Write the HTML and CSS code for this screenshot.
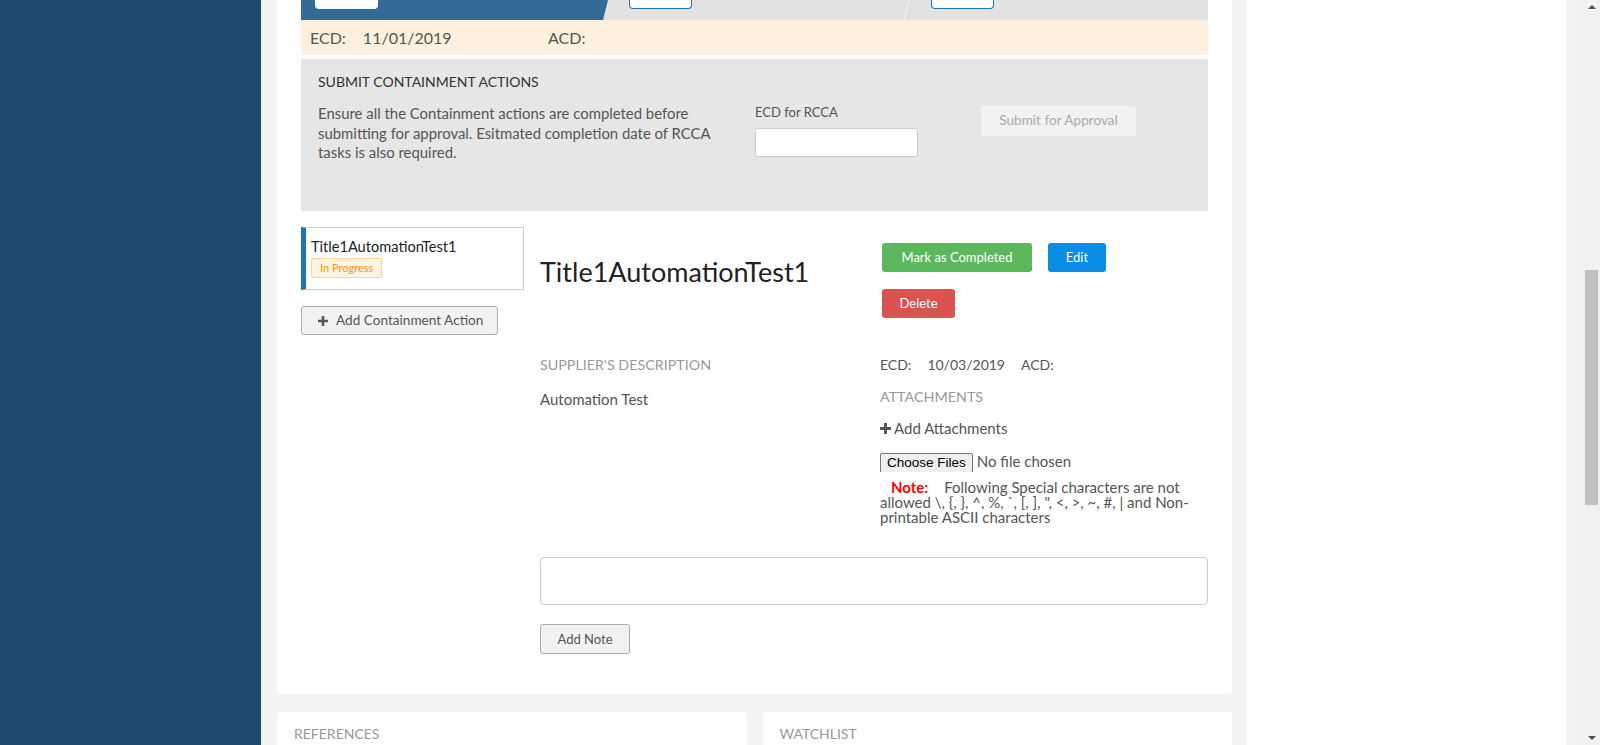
FILE: index.html
```html
<!DOCTYPE html>
<html lang="en">
<head>
<meta charset="utf-8">
<title>Containment Actions</title>
<link rel="stylesheet" href="styles.css">
</head>
<body>
<div class="layout">
  <aside class="sidebar"></aside>

  <main class="main">
    <section class="card main-card">
      <div class="steps">
        <div class="step step-done"><span class="step-tab"></span></div>
        <div class="step step-sep"><span class="step-tab"></span></div>
        <div class="step"><span class="step-tab"></span></div>
      </div>

      <div class="dates">
        <span class="date-group"><span>ECD:</span><span>11/01/2019</span></span>
        <span>ACD:</span>
      </div>

      <div class="submit-panel">
        <h3 class="submit-title">SUBMIT CONTAINMENT ACTIONS</h3>
        <div class="submit-body">
          <p class="submit-text">Ensure all the Containment actions are completed before submitting for approval. Esitmated completion date of RCCA tasks is also required.</p>
          <div class="ecd-field">
            <label class="field-label">ECD for RCCA</label>
            <input class="text-input" type="text">
          </div>
          <div>
            <button class="btn btn-disabled" type="button">Submit for Approval</button>
          </div>
        </div>
      </div>

      <div class="actions">
        <div class="action-list">
          <div class="action-item">
            <div class="action-item-title">Title1AutomationTest1</div>
            <span class="badge">In Progress</span>
          </div>
          <button class="btn btn-default btn-add" type="button">
            <svg class="plus" width="10" height="10" viewBox="0 0 10 10"><path d="M3.7 0h2.6v3.7H10v2.6H6.3V10H3.7V6.3H0V3.7h3.7z" fill="#555"/></svg>
            Add Containment Action
          </button>
        </div>

        <div class="action-detail">
          <div class="detail-head">
            <h2 class="detail-title">Title1AutomationTest1</h2>
            <div class="detail-buttons">
              <div class="btn-row">
                <button class="btn btn-success" type="button">Mark as Completed</button>
                <button class="btn btn-primary" type="button">Edit</button>
              </div>
              <div class="btn-row">
                <button class="btn btn-danger" type="button">Delete</button>
              </div>
            </div>
          </div>

          <div class="detail-info">
            <div>
              <div class="info-label">SUPPLIER'S DESCRIPTION</div>
              <div class="info-text">Automation Test</div>
            </div>
            <div>
              <div class="info-dates">
                <span>ECD:</span><span>10/03/2019</span><span>ACD:</span>
              </div>
              <div class="info-label attach-label">ATTACHMENTS</div>
              <div class="add-attach">
                <svg class="plus" width="11" height="11" viewBox="0 0 10 10"><path d="M3.7 0h2.6v3.7H10v2.6H6.3V10H3.7V6.3H0V3.7h3.7z" fill="#555"/></svg>
                <span>Add Attachments</span>
              </div>
              <input class="file-input" type="file" multiple>
              <p class="note"><span class="note-label">Note:</span>Following Special characters are not allowed \, {, }, ^, %, `, [, ], ", &lt;, &gt;, ~, #, | and Non-printable ASCII characters</p>
            </div>
          </div>

          <textarea class="note-area"></textarea>
          <button class="btn btn-default btn-note" type="button">Add Note</button>
        </div>
      </div>
    </section>

    <div class="bottom-cards">
      <section class="card small-card"><h4 class="card-title">REFERENCES</h4></section>
      <section class="card small-card"><h4 class="card-title">WATCHLIST</h4></section>
    </div>
  </main>

  <aside class="right-panel"></aside>
  <div class="gutter"></div>
  <div class="scrollbar">
    <span class="sb-arrow sb-up"></span>
    <div class="sb-track"><div class="sb-thumb"></div></div>
    <span class="sb-arrow sb-down"></span>
  </div>
</div>
</body>
</html>
```

FILE: styles.css
```css
html, body {
  margin: 0;
  height: 100%;
}

body {
  background: #f3f3f3;
  font-family: "Lato", "Noto Sans", sans-serif;
  color: #555;
  overflow: hidden;
}

.layout {
  display: grid;
  grid-template-columns: 261px 1fr 319px 17px 17px;
  height: 745px;
  overflow: hidden;
}

.sidebar {
  background: #1e4a6d;
}

.main {
  padding: 0 15px 0 16px;
  overflow: hidden;
}

.card {
  background: #fff;
  border-radius: 4px;
}

.main-card {
  border-radius: 0 0 4px 4px;
  padding: 0 24px 40px;
}

/* progress steps (scrolled, only bottom visible) */
.steps {
  display: grid;
  grid-template-columns: 307px 302px 1fr;
  height: 20px;
  background: #e2e2e2;
}

.step {
  position: relative;
  padding-left: 21px;
}

.step-done {
  background: #336a96;
  clip-path: polygon(0 0, 100% 0, calc(100% - 5px) 100%, 0 100%);
  padding-left: 14px;
}

.step-sep::after {
  content: "";
  position: absolute;
  top: 0;
  right: 3px;
  width: 1px;
  height: 100%;
  background: #f6f6f6;
  transform: skewX(-15deg);
}

.step-tab {
  display: block;
  width: 61px;
  height: 8px;
  background: #fff;
  border: 1px solid #1a75bb;
  border-top: 0;
  border-radius: 0 0 4px 4px;
}

.step-done .step-tab {
  border-color: #fff;
}

/* ecd / acd band */
.dates {
  display: flex;
  align-items: center;
  height: 35px;
  background: #fdf0de;
  padding-left: 9px;
  font-size: 16px;
  color: #555;
}

.date-group {
  display: flex;
  gap: 17px;
  width: 238px;
}

/* submit panel */
.submit-panel {
  margin-top: 4px;
  height: 152px;
  box-sizing: border-box;
  background: #e6e6e6;
  padding: 13px 17px;
}

.submit-title {
  margin: 0;
  font-size: 14px;
  font-weight: 400;
  line-height: 20px;
  color: #333;
}

.submit-body {
  display: grid;
  grid-template-columns: 437px 226px auto;
  margin-top: 12px;
}

.submit-text {
  margin: 0;
  max-width: 405px;
  font-size: 14.9px;
  line-height: 19.5px;
  color: #555;
}

.field-label {
  display: block;
  font-size: 13px;
  line-height: 16px;
  color: #555;
}

.text-input {
  display: block;
  margin-top: 8px;
  width: 163px;
  height: 29px;
  box-sizing: border-box;
  border: 1px solid #ccc;
  border-radius: 3px;
  background: #fff;
}

/* buttons */
.btn {
  font-family: inherit;
  font-size: 13px;
  line-height: 1;
  border-radius: 3px;
  box-sizing: border-box;
  cursor: pointer;
  padding: 0;
}

.btn-disabled {
  margin-top: 2px;
  width: 155px;
  height: 30px;
  border: none;
  background: #f2f2f2;
  color: #aaa;
  font-size: 13.6px;
}

.btn-default {
  background: #f2f2f2;
  border: 1px solid #adadad;
  color: #555;
}

.btn-success,
.btn-primary,
.btn-danger {
  height: 29px;
  border: none;
  color: #fff;
}

.btn-success {
  width: 150px;
  background: #5cb85c;
}

.btn-primary {
  width: 58px;
  background: #0a8de4;
}

.btn-danger {
  width: 73px;
  background: #d9534f;
}

/* actions */
.actions {
  display: grid;
  grid-template-columns: 223px 1fr;
  column-gap: 16px;
  margin-top: 16px;
}

.action-item {
  border: 1px solid #ccc;
  border-left: 5px solid #1a75bb;
  padding: 10px 8px 11px 5px;
}

.action-item-title {
  font-size: 14.6px;
  line-height: 18px;
  color: #222;
}

.badge {
  display: inline-block;
  margin-top: 1px;
  height: 20px;
  box-sizing: border-box;
  padding: 0 8px;
  border: 1px solid #fcd3a0;
  border-radius: 2px;
  background: #fff3e2;
  color: #f7941d;
  font-size: 11px;
  line-height: 18px;
}

.btn-add {
  display: flex;
  align-items: center;
  gap: 8px;
  margin-top: 16px;
  width: 197px;
  height: 29px;
  padding-left: 16px;
  font-size: 13.6px;
}

.plus {
  display: block;
  flex: none;
}

.detail-head {
  display: grid;
  grid-template-columns: 342px 1fr;
}

.detail-title {
  margin: 30px 0 0;
  font-size: 27px;
  font-weight: 400;
  line-height: 30px;
  color: #222;
}

.detail-buttons {
  padding-top: 16px;
}

.btn-row {
  display: flex;
  gap: 16px;
}

.btn-row + .btn-row {
  margin-top: 17px;
}

.detail-info {
  display: grid;
  grid-template-columns: 340px 1fr;
  margin-top: 37px;
  font-size: 14px;
  line-height: 20px;
}

.info-label {
  color: #999;
  font-size: 14.3px;
}

.info-text {
  margin-top: 14px;
  color: #555;
  font-size: 15px;
}

.info-dates {
  display: flex;
  gap: 16px;
  color: #555;
}

.attach-label {
  margin-top: 12px;
}

.add-attach {
  display: flex;
  align-items: center;
  gap: 3px;
  margin-top: 11px;
  font-size: 15px;
  color: #555;
}

.file-input {
  display: block;
  margin-top: 14px;
  height: 20px;
  font-family: inherit;
  font-size: 15px;
  color: #555;
}

.file-input::file-selector-button {
  height: 20px;
  margin-right: 4px;
  padding: 0 6px;
  border: 1px solid #767676;
  border-radius: 2px;
  background: #efefef;
  font-family: "Liberation Sans", Arial, sans-serif;
  font-size: 13.5px;
  color: #000;
}

.note {
  margin: 8px 0 0;
  font-size: 15px;
  line-height: 15px;
  color: #555;
}

.note-label {
  display: inline-block;
  height: 15px;
  line-height: 15px;
  margin: 0 16px 0 11px;
  color: #f00;
  font-weight: 700;
}

.note-area {
  display: block;
  margin-top: 32px;
  width: 100%;
  height: 48px;
  box-sizing: border-box;
  border: 1px solid #ccc;
  border-radius: 4px;
  resize: none;
  font-family: inherit;
}

.btn-note {
  display: block;
  margin-top: 19px;
  width: 90px;
  height: 30px;
}

/* bottom cards */
.bottom-cards {
  display: grid;
  grid-template-columns: 1fr 1fr;
  gap: 16px;
  margin-top: 18px;
}

.small-card {
  height: 60px;
  padding: 14px 17px;
}

.card-title {
  margin: 0;
  font-size: 14px;
  font-weight: 400;
  line-height: 16px;
  color: #999;
}

/* right side */
.right-panel {
  background: #fff;
}

.gutter {
  background: #f3f3f3;
}

.scrollbar {
  display: flex;
  flex-direction: column;
  align-items: center;
  background: #f1f1f1;
}

.sb-arrow {
  display: block;
  width: 0;
  height: 0;
  border-left: 4px solid transparent;
  border-right: 4px solid transparent;
}

.sb-up {
  margin: 5px 0 4px;
  border-bottom: 4px solid #505050;
}

.sb-down {
  margin: 4px 0 5px;
  border-top: 4px solid #505050;
}

.sb-track {
  flex: 1;
  width: 100%;
  padding-top: 257px;
  box-sizing: border-box;
}

.sb-thumb {
  width: 13px;
  height: 235px;
  margin: 0 auto;
  background: #c1c1c1;
}
```
